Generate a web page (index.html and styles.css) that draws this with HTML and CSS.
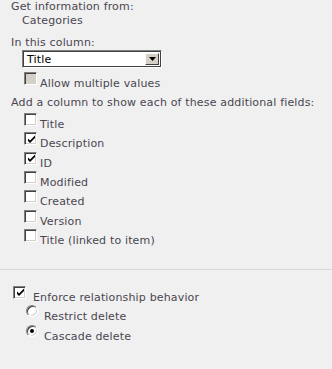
FILE: index.html
```html
<!DOCTYPE html>
<html>
<head>
<meta charset="utf-8">
<link rel="stylesheet" href="styles.css">
</head>
<body>
<div class="sec">
  <div class="lbl">Get information from:</div>
  <div class="val">Categories</div>
  <div class="lbl lbl-col">In this column:</div>
  <div class="select">
    <span class="sel-text">Title</span>
    <span class="sel-btn"><svg width="7" height="4" viewBox="0 0 7 4"><path d="M0 0h7L3.5 4z" fill="#000"/></svg></span>
  </div>
  <div class="cb-row allow">
    <span class="cb disabled"></span><span class="cb-text">Allow multiple values</span>
  </div>
  <div class="lbl lbl-add">Add a column to show each of these additional fields:</div>
  <div class="fields">
    <div class="cb-row"><span class="cb"></span><span class="cb-text">Title</span></div>
    <div class="cb-row"><span class="cb checked"><svg width="9" height="9" viewBox="0 0 9 9"><path d="M1 3.5l2 2 5-5v2.5L3 8 1 6z" fill="#000"/></svg></span><span class="cb-text">Description</span></div>
    <div class="cb-row"><span class="cb checked"><svg width="9" height="9" viewBox="0 0 9 9"><path d="M1 3.5l2 2 5-5v2.5L3 8 1 6z" fill="#000"/></svg></span><span class="cb-text">ID</span></div>
    <div class="cb-row"><span class="cb"></span><span class="cb-text">Modified</span></div>
    <div class="cb-row"><span class="cb"></span><span class="cb-text">Created</span></div>
    <div class="cb-row"><span class="cb"></span><span class="cb-text">Version</span></div>
    <div class="cb-row"><span class="cb"></span><span class="cb-text">Title (linked to item)</span></div>
  </div>
</div>
<div class="sep"></div>
<div class="sec2">
  <div class="cb-row enforce"><span class="cb checked"><svg width="9" height="9" viewBox="0 0 9 9"><path d="M1 3.5l2 2 5-5v2.5L3 8 1 6z" fill="#000"/></svg></span><span class="cb-text">Enforce relationship behavior</span></div>
  <div class="radios">
    <div class="rb-row"><span class="rb"></span><span class="rb-text">Restrict delete</span></div>
    <div class="rb-row"><span class="rb on"></span><span class="rb-text">Cascade delete</span></div>
  </div>
</div>
</body>
</html>
```
FILE: styles.css
```css
html, body {
  margin: 0;
  padding: 0;
  background: #f0f0f0;
}
body {
  font-family: "DejaVu Sans", Verdana, sans-serif;
  font-size: 11px;
  line-height: 13px;
  letter-spacing: 0.16px;
  color: #4a4650;
  width: 332px;
  height: 369px;
  overflow: hidden;
}
.sec {
  padding: 0 0 0 11px;
}
.lbl {
  height: 13px;
}
.val {
  padding-left: 11px;
  height: 13px;
  margin-top: 1px;
}
.lbl-col {
  margin-top: 9px;
}
.select {
  margin: 1px 0 0 11px;
  width: 140px;
  height: 18px;
  box-sizing: border-box;
  background: #fff;
  border: 1px solid;
  border-color: #808080 #fff #fff #808080;
  box-shadow: inset 1px 1px 0 #404040, inset -1px -1px 0 #404040;
  display: flex;
  align-items: center;
  justify-content: space-between;
  padding: 2px;
}
.sel-text {
  color: #000;
  padding-left: 2px;
}
.sel-btn {
  width: 14px;
  height: 12px;
  box-sizing: border-box;
  background: #d4d0c8;
  border: 1px solid;
  border-color: #fff #404040 #404040 #fff;
  display: flex;
  align-items: center;
  justify-content: center;
}
.cb-row {
  display: flex;
  align-items: flex-start;
}
.cb {
  width: 13px;
  height: 13px;
  flex: none;
  box-sizing: border-box;
  background: #fff;
  border: 1px solid;
  border-color: #808080 #fff #fff #808080;
  box-shadow: inset 1px 1px 0 #404040, inset -1px -1px 0 #d4d0c8;
  display: flex;
  align-items: center;
  justify-content: center;
  padding: 1px 0 0 1px;
}
.cb.disabled {
  background: #d4d0c8;
}
.cb-text {
  margin-left: 3px;
  padding-top: 5px;
}
.allow {
  margin: 4px 0 0 13px;
}
.lbl-add {
  margin-top: 6px;
}
.fields {
  padding-left: 13px;
  display: flex;
  flex-direction: column;
  gap: 1.33px;
  margin-top: 4px;
}
.sep {
  margin-top: 22px;
  height: 1px;
  background: #d8d8d8;
}
.sec2 {
  padding: 16px 0 0 13px;
}
.enforce .cb-text {
  margin-left: 7px;
  padding-top: 5px;
}
.radios {
  padding-left: 13px;
  display: flex;
  flex-direction: column;
  gap: 2px;
  margin-top: 1px;
}
.rb-row {
  display: flex;
  align-items: flex-start;
}
.rb {
  width: 12px;
  height: 12px;
  flex: none;
  box-sizing: border-box;
  border-radius: 50%;
  background: #fff;
  border: 1px solid;
  border-color: #808080 #fff #fff #808080;
  box-shadow: inset 1px 1px 0 #404040, inset -1px -1px 0 #d4d0c8;
  display: flex;
  align-items: center;
  justify-content: center;
}
.rb.on::after {
  content: "";
  width: 4px;
  height: 4px;
  border-radius: 50%;
  background: #000;
}
.rb-text {
  margin-left: 6px;
  padding-top: 5px;
}
```
